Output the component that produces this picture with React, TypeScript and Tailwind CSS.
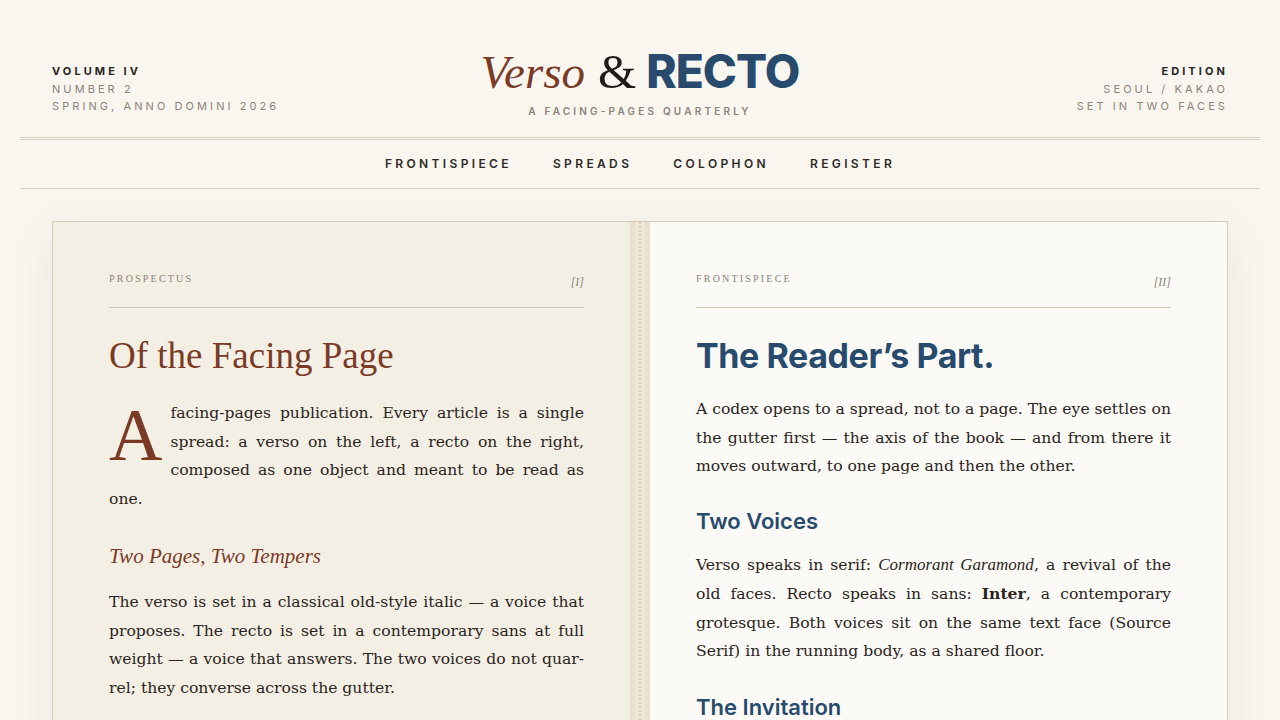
import React from "react";

const serif = { fontFamily: '"Liberation Serif", "DejaVu Serif", serif' };
const body = { fontFamily: '"DejaVu Serif", "Liberation Serif", serif' };
const sans = { fontFamily: 'Inter, "Liberation Sans", sans-serif' };

export default function App() {
  return (
    <div className="h-[720px] bg-[#f9f6f0] text-[#2a2420] overflow-hidden" style={sans}>
      <header className="px-[20px]">
        <div className="h-[137px] flex items-start justify-between px-[32px] pt-[63px]">
          <div className="w-[300px] text-[11px] leading-[17.5px] tracking-[0.28em] uppercase">
            <div className="font-bold text-[#2a2420]">Volume IV</div>
            <div className="text-[#8c8378]">Number 2</div>
            <div className="text-[#8c8378]">Spring, Anno Domini 2026</div>
          </div>
          <div className="flex flex-col items-center -mt-[16px]">
            <div className="flex items-baseline leading-none">
              <span className="italic text-[47px] text-[#7a3a26]" style={serif}>Verso</span>
              <span className="text-[49px] text-[#1f1b18] ml-[13px]" style={serif}>&amp;</span>
              <span className="text-[46px] font-extrabold tracking-[-0.02em] text-[#284b6d] ml-[10px]" style={sans}>RECTO</span>
            </div>
            <div className="mt-[8px] text-[10px] font-semibold tracking-[0.32em] text-[#8c8378]">A FACING-PAGES QUARTERLY</div>
          </div>
          <div className="w-[300px] text-right text-[11px] leading-[17.5px] tracking-[0.28em] uppercase">
            <div className="font-bold text-[#2a2420]">Edition</div>
            <div className="text-[#8c8378]">Seoul / Kakao</div>
            <div className="text-[#8c8378]">Set in two faces</div>
          </div>
        </div>
        <div className="border-t border-b border-[#d9cfbf] h-[3px]" />
        <nav className="flex justify-center gap-[41px] h-[49px] items-center border-b border-[#d9cfbf] text-[12px] font-semibold tracking-[0.28em] text-[#2f2a26]">
          <span>FRONTISPIECE</span>
          <span>SPREADS</span>
          <span>COLOPHON</span>
          <span>REGISTER</span>
        </nav>
      </header>

      <main className="px-[52px] pt-[32px]">
        <div className="flex border border-[#d6ccba] shadow-[0_10px_40px_rgba(120,100,70,0.10)] h-[560px]">
          <section className="w-[577px] bg-[#f4efe5] pl-[56px] pr-[46px] pt-[49px]">
            <div className="flex justify-between items-end pb-[21px] border-b border-[#cfc6b6]">
              <span className="text-[10px] tracking-[0.22em] text-[#8c8378]" style={serif}>PROSPECTUS</span>
              <span className="italic text-[12px] text-[#8c8378] -mb-[5px]" style={serif}>[I]</span>
            </div>
            <h1 className="mt-[25px] text-[37px] leading-[46px] text-[#7a3a26]" style={serif}>Of the Facing Page</h1>
            <p className="mt-[20px] text-[15.6px] leading-[28.7px] text-justify text-[#2a2420]" style={body}>
              <span className="float-left text-[74px] leading-[60px] mt-[6px] mr-[8px] text-[#7a3a26]" style={serif}>A</span>
              facing-pages publication. Every article is a single spread: a verso on the left, a recto on the right, composed as one object and meant to be read as one.
            </p>
            <h2 className="mt-[27px] italic text-[21px] leading-[30px] text-[#7a3a26]" style={serif}>Two Pages, Two Tempers</h2>
            <p className="mt-[17px] text-[15.6px] leading-[28.7px] text-justify text-[#2a2420]" style={body}>
              The verso is set in a classical old-style italic — a voice that proposes. The recto is set in a contemporary sans at full weight — a voice that answers. The two voices do not quar&shy;rel; they converse across the gutter.
            </p>
          </section>
          <div className="w-[20px] flex justify-center bg-[#efe8da] border-x-[5px] border-[#e9e0cd]">
            <div className="h-full border-l-2 border-dotted border-[#d9ccb0]" />
          </div>
          <section className="flex-1 bg-[#fcfaf6] pl-[46px] pr-[56px] pt-[49px]">
            <div className="flex justify-between items-end pb-[21px] border-b border-[#cfc6b6]">
              <span className="text-[10px] tracking-[0.22em] text-[#8c8378]" style={serif}>FRONTISPIECE</span>
              <span className="italic text-[12px] text-[#8c8378] -mb-[5px]" style={serif}>[II]</span>
            </div>
            <h1 className="mt-[27px] text-[34px] leading-[42px] font-bold tracking-[-0.012em] text-[#284b6d]" style={sans}>The Reader’s Part.</h1>
            <p className="mt-[18px] text-[15.6px] leading-[28.7px] text-justify text-[#2a2420]" style={body}>
              A codex opens to a spread, not to a page. The eye settles on the gutter first — the axis of the book — and from there it moves outward, to one page and then the other.
            </p>
            <h2 className="mt-[25px] text-[22px] leading-[30px] font-semibold text-[#284b6d]" style={sans}>Two Voices</h2>
            <p className="mt-[15px] text-[15.6px] leading-[28.7px] text-justify text-[#2a2420]" style={body}>
              Verso speaks in serif: <em className="text-[17px]" style={serif}>Cormorant Garamond</em>, a revival of the old faces. Recto speaks in sans: <strong>Inter</strong>, a contemporary grotesque. Both voices sit on the same text face (Source Serif) in the running body, as a shared floor.
            </p>
            <h2 className="mt-[26px] text-[22px] leading-[30px] font-semibold text-[#284b6d]" style={sans}>The Invitation</h2>
          </section>
        </div>
      </main>
    </div>
  );
}
